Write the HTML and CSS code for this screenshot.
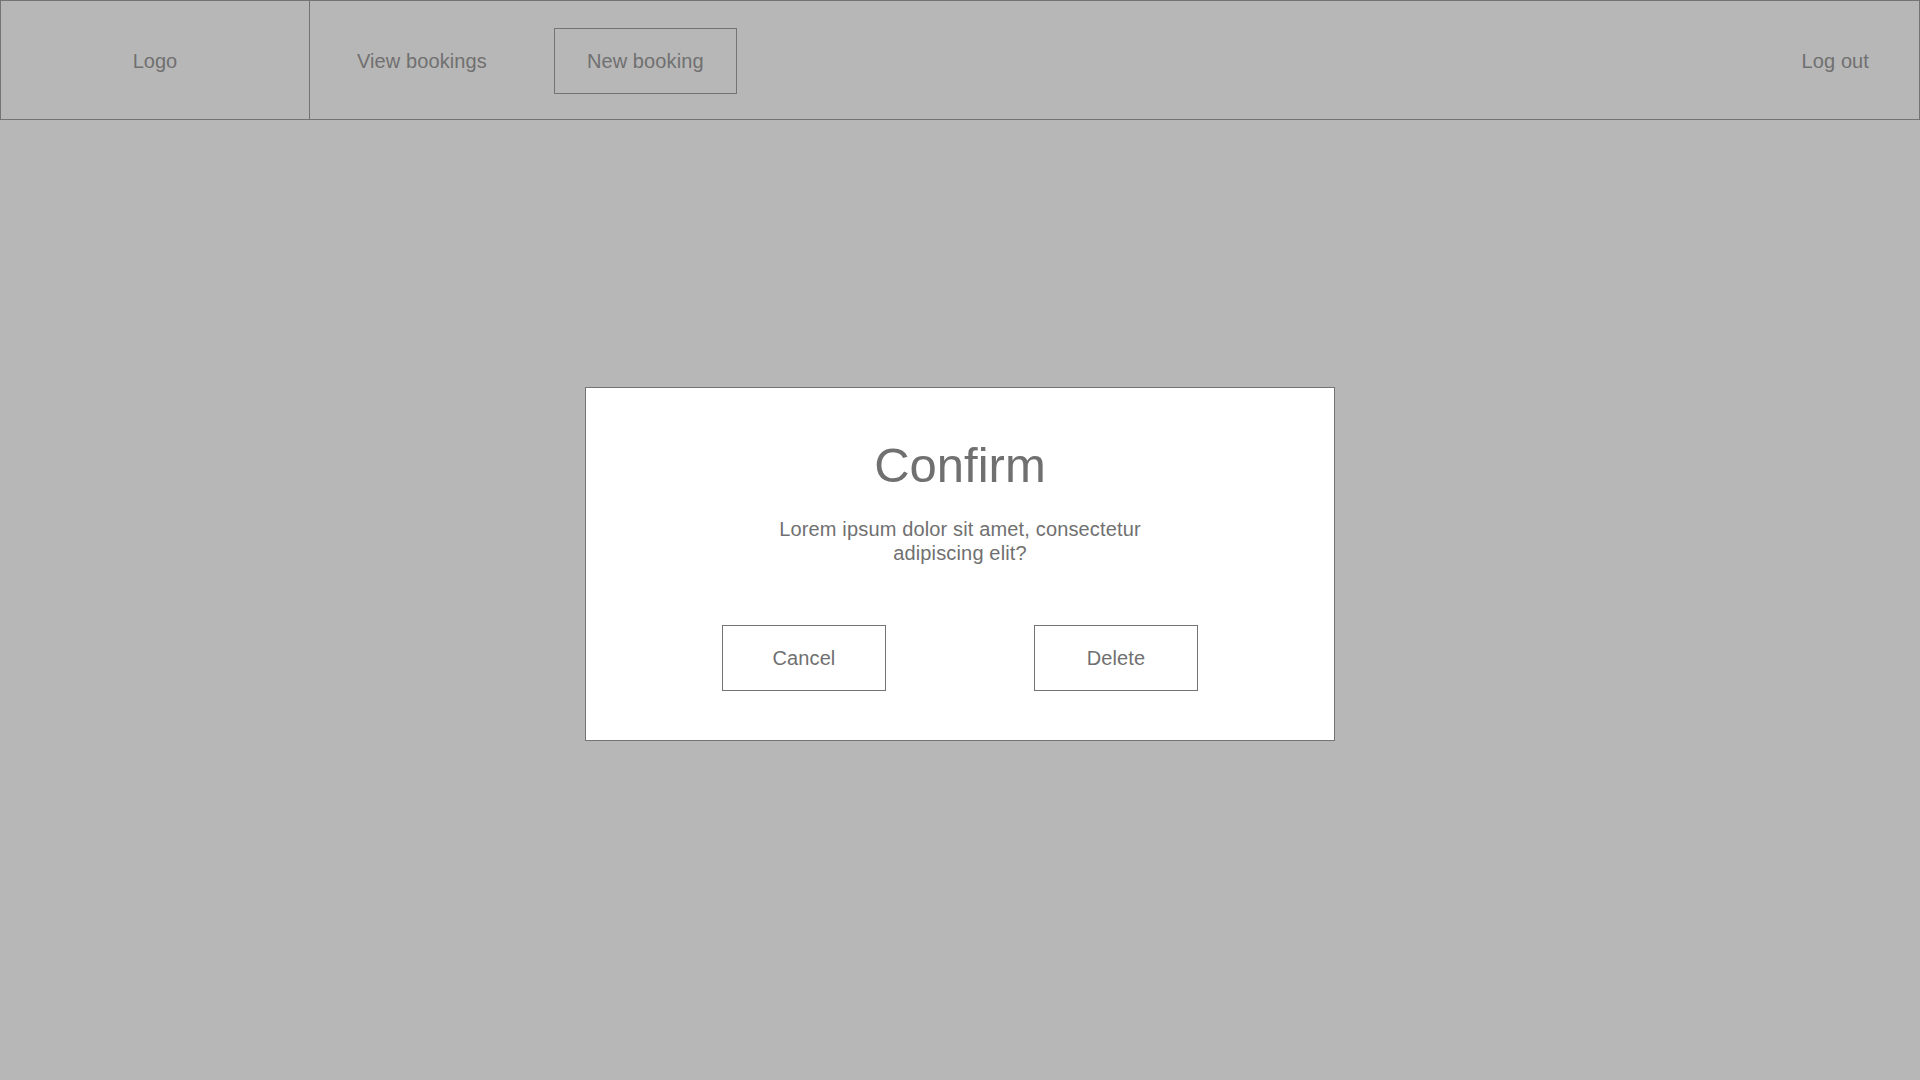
FILE: index.html
```html
<!DOCTYPE html>
<html lang="en">
<head>
<meta charset="utf-8">
<title>Confirm</title>
<link rel="stylesheet" href="styles.css">
</head>
<body>
<header class="topbar">
  <div class="logo">Logo</div>
  <nav class="nav">
    <a class="nav-item">View bookings</a>
    <a class="nav-item nav-item--active">New booking</a>
  </nav>
  <a class="logout">Log out</a>
</header>
<main class="main">
  <section class="dialog">
    <h1 class="dialog-title">Confirm</h1>
    <p class="dialog-text">Lorem ipsum dolor sit amet, consectetur adipiscing elit?</p>
    <div class="dialog-actions">
      <button class="btn">Cancel</button>
      <button class="btn">Delete</button>
    </div>
  </section>
</main>
</body>
</html>
```

FILE: styles.css
```css
* { box-sizing: border-box; }
html, body {
  margin: 0;
  padding: 0;
  background: #b7b7b7;
  color: #707070;
  font-family: "Liberation Sans", Arial, Helvetica, sans-serif;
  font-size: 20px;
  line-height: 24px;
}
.topbar {
  height: 120px;
  border: 1px solid #747474;
  display: flex;
  align-items: center;
}
.logo {
  width: 309px;
  height: 100%;
  border-right: 1px solid #747474;
  display: flex;
  align-items: center;
  justify-content: center;
  padding-top: 1px;
}
.nav {
  display: flex;
  align-items: center;
  gap: 34px;
  padding-left: 14px;
  height: 100%;
}
.nav-item {
  height: 66px;
  margin-top: 2px;
  border: 1px solid transparent;
  padding: 0 32px;
  display: flex;
  align-items: center;
  letter-spacing: 0.1px;
}
.nav-item--active {
  border-color: #747474;
}
.logout {
  margin-left: auto;
  padding: 1px 50px 0 0;
  letter-spacing: 0.1px;
}
.main {
  padding-top: 267px;
}
.dialog {
  width: 750px;
  margin: 0 auto;
  background: #ffffff;
  border: 1px solid #747474;
  padding: 49px 0 49px;
  display: flex;
  flex-direction: column;
  align-items: center;
}
.dialog-title {
  margin: 0;
  font-weight: 400;
  font-size: 49px;
  line-height: 56px;
}
.dialog-text {
  margin: 24px 0 0;
  width: 380px;
  text-align: center;
  letter-spacing: 0.15px;
}
.dialog-actions {
  margin-top: 60px;
  display: flex;
  gap: 148px;
}
.btn {
  width: 164px;
  height: 66px;
  background: #ffffff;
  border: 1px solid #747474;
  color: #707070;
  font-family: inherit;
  font-size: 20px;
  line-height: 24px;
  padding: 0;
  letter-spacing: 0.1px;
}
```
